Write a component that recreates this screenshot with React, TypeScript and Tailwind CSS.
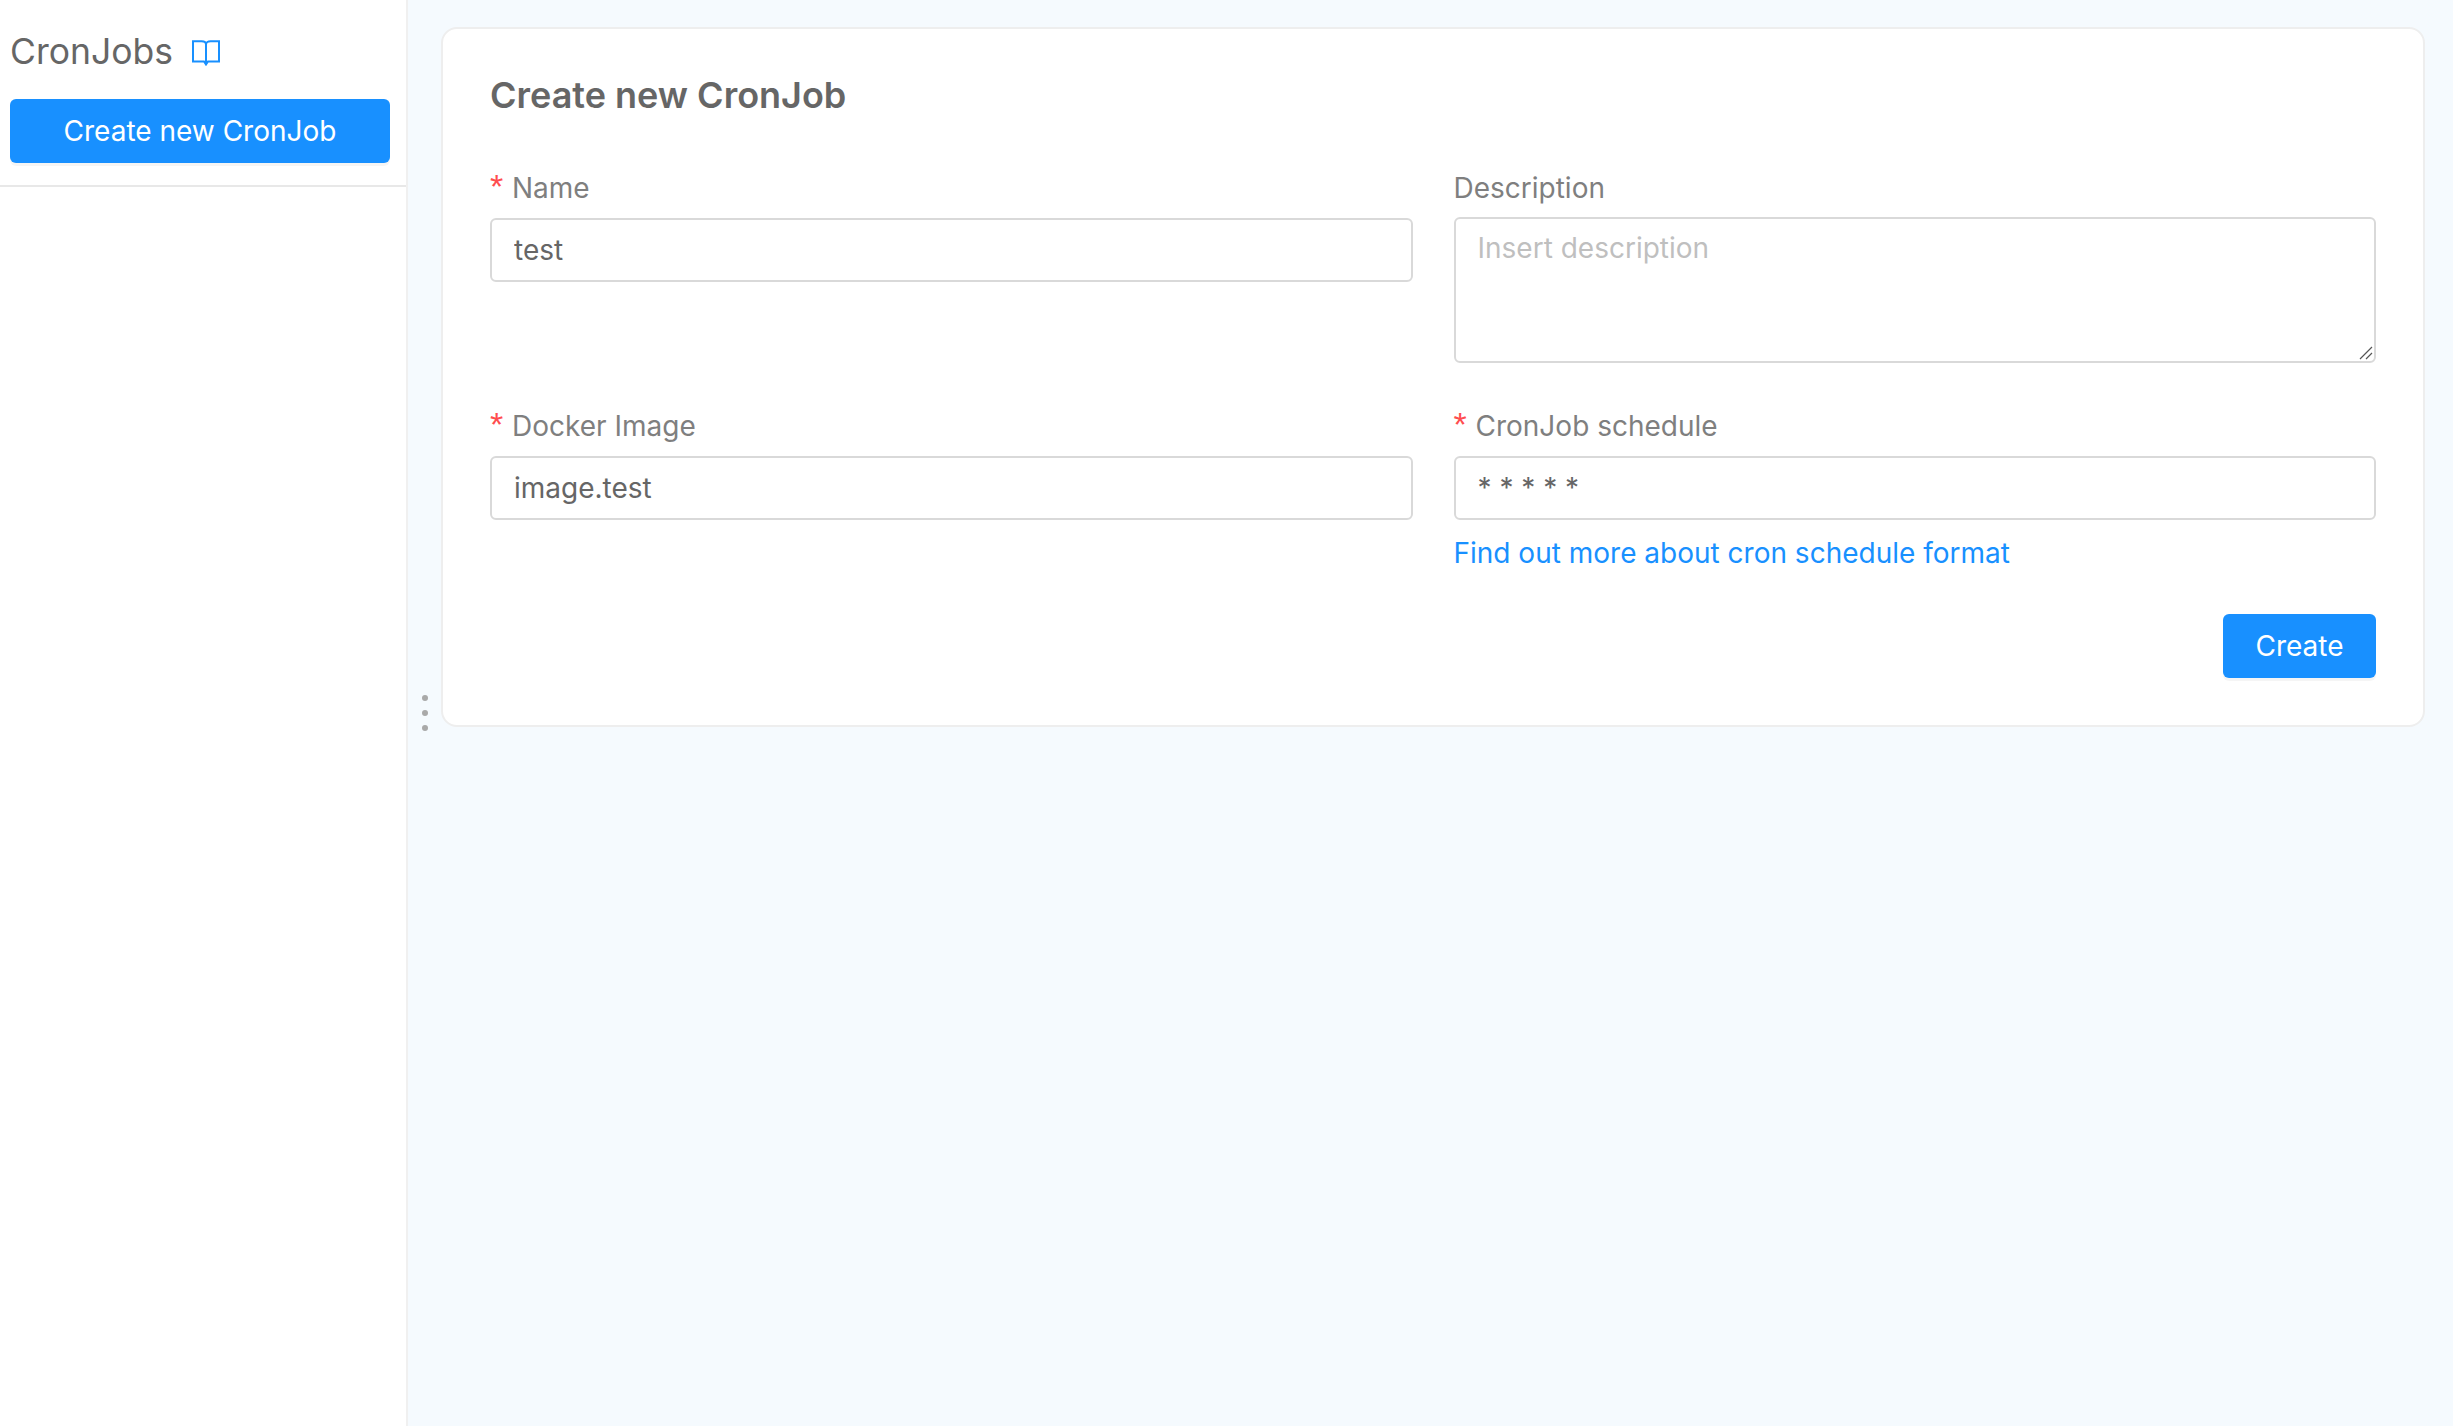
import React from 'react';

const font = { fontFamily: 'Inter, sans-serif' };

const Label: React.FC<{ text: string; required?: boolean }> = ({ text, required }) => (
  <label className="flex items-center h-[30px] text-[28px] leading-[30px] text-[#7f7f7f]">
    {required && (
      <span className="w-[22px] -mt-[4px] text-[34px] font-light text-[#ff4d4f] font-['Liberation_Sans',sans-serif]">*</span>
    )}
    {text}
  </label>
);

const TextInput: React.FC<{ value: string }> = ({ value }) => (
  <input
    readOnly
    value={value}
    className="w-full h-[64px] px-[22px] border-2 border-[#d9d9d9] rounded-[6px] bg-white text-[28px] text-[#666666] outline-none"
  />
);

export default function App() {
  return (
    <div style={font} className="flex w-full h-[1426px] bg-[#f5fafe] overflow-hidden">
      <aside className="w-[408px] shrink-0 bg-white border-r-2 border-[#f0f0f0]">
        <div className="pl-[10px] pr-[16px] pt-[31px] pb-[22px] border-b-2 border-[#e8e8e8]">
          <div className="flex items-center gap-[19px] h-[42px]">
            <h1 className="text-[35.5px] leading-[42px] text-[#666666] font-normal">CronJobs</h1>
            <svg className="mt-[2px]" width="28" height="26" viewBox="0 0 28 26" fill="none" stroke="#1890ff" strokeWidth="2">
              <path d="M1 1.2H9.5C12 1.2 14 2.5 14 4.5C14 2.5 16 1.2 18.5 1.2H27V21.5H16L14 24.5L12 21.5H1ZM14 4.5V24" />
            </svg>
          </div>
          <button className="mt-[26px] w-[380px] h-[64px] rounded-[6px] bg-[#1890ff] text-white text-[28px] shadow-[0_3px_0_rgba(0,0,0,0.04)]">
            Create new CronJob
          </button>
        </div>
      </aside>

      <div className="w-[33px] shrink-0 flex flex-col items-center justify-center gap-[9px]">
        <span className="w-[6px] h-[6px] rounded-full bg-[#a9a9a9]" />
        <span className="w-[6px] h-[6px] rounded-full bg-[#a9a9a9]" />
        <span className="w-[6px] h-[6px] rounded-full bg-[#a9a9a9]" />
      </div>

      <main className="flex-1 pt-[27px] pr-[28px]">
        <section className="h-[700px] bg-white border-2 border-[#eeeeee] rounded-[16px] pt-[44px] pl-[47px] pr-[47px]">
          <h2 className="text-[36px] leading-[44px] font-semibold text-[#666666]">Create new CronJob</h2>

          <div className="grid grid-cols-2 gap-x-[41px] mt-[56px]">
            <div className="h-[238px] flex flex-col gap-[15px]">
              <Label text="Name" required />
              <TextInput value="test" />
            </div>
            <div className="h-[238px] flex flex-col gap-[14px]">
              <Label text="Description" />
              <div className="relative h-[146px]">
                <textarea
                  readOnly
                  placeholder="Insert description"
                  className="block w-full h-full resize-none px-[22px] py-[11px] border-2 border-[#d9d9d9] rounded-[6px] text-[28px] leading-[36px] text-[#666666] placeholder:text-[#bfbfbf] outline-none"
                />
                <svg className="absolute right-[3px] bottom-[3px]" width="14" height="14" viewBox="0 0 14 14" fill="none" stroke="#555555" strokeWidth="1.2">
                  <path d="M1 13L13 1M7 13L13 7" />
                </svg>
              </div>
            </div>
            <div className="flex flex-col gap-[15px]">
              <Label text="Docker Image" required />
              <TextInput value="image.test" />
            </div>
            <div className="flex flex-col gap-[15px]">
              <Label text="CronJob schedule" required />
              <TextInput value="* * * * *" />
              <a href="#" className="text-[28px] leading-[36px] text-[#1890ff]">
                Find out more about cron schedule format
              </a>
            </div>
          </div>

          <div className="flex justify-end mt-[43px]">
            <button className="w-[153px] h-[64px] rounded-[6px] bg-[#1890ff] text-white text-[28px] shadow-[0_3px_0_rgba(0,0,0,0.04)]">
              Create
            </button>
          </div>
        </section>
      </main>
    </div>
  );
}
